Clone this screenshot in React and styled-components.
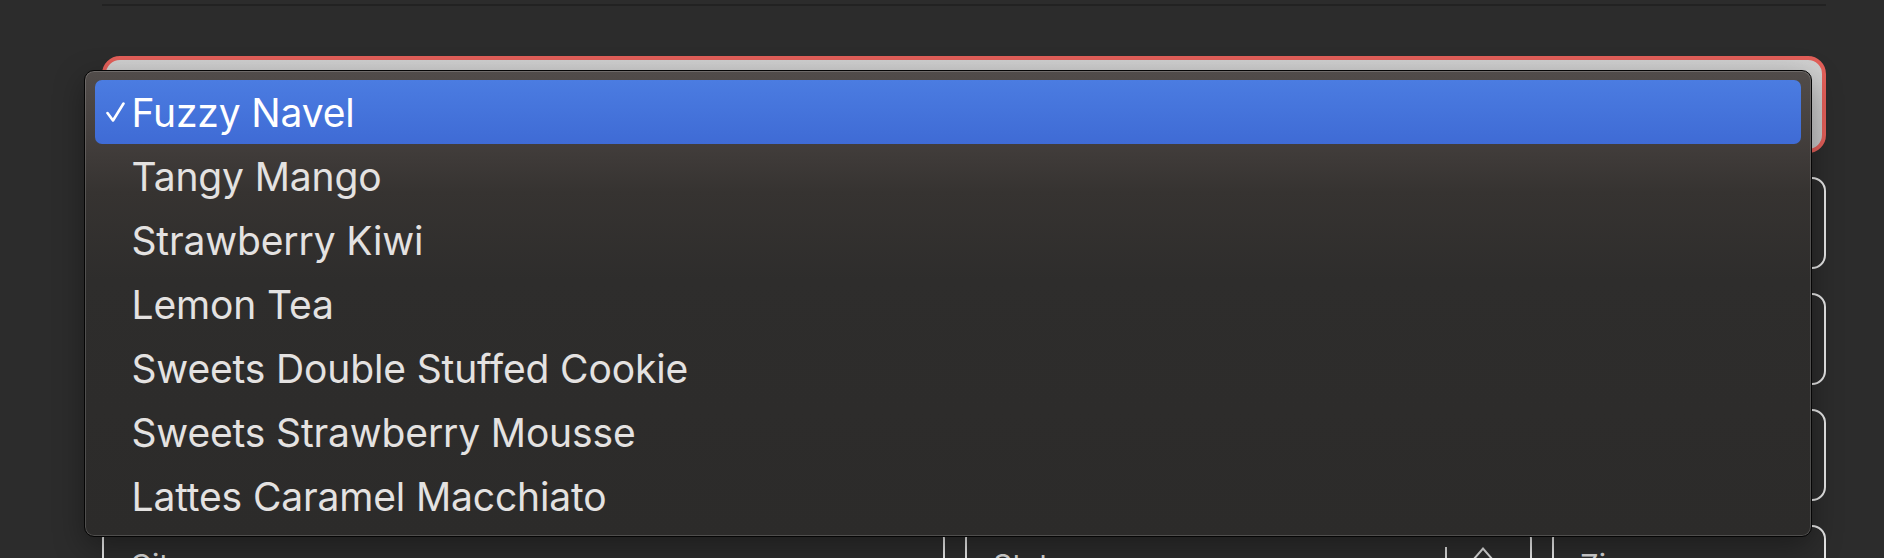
import React from "react";
import styled, { createGlobalStyle } from "styled-components";

const Global = createGlobalStyle`
  html, body { margin: 0; padding: 0; background: #2c2c2c; }
  body { font-family: Inter, "Liberation Sans", sans-serif; overflow: hidden; }
  * { box-sizing: border-box; }
`;

const Page = styled.div`
  width: 1884px;
  height: 558px;
  padding: 4px 58px 0 102px;
  background: #2c2c2c;
  overflow: hidden;
`;

const Divider = styled.div`
  height: 2px;
  background: #222222;
  margin-bottom: 50px;
`;

const Form = styled.div`
  display: flex;
  flex-direction: column;
  gap: 24px;
`;

const SelectWrap = styled.div`
  position: relative;
  height: 97px;
`;

const FocusSelect = styled.div`
  height: 100%;
  border: 4px solid #e35f59;
  border-radius: 18px;
  background: linear-gradient(#d0d0d0, #c6c6c6);
`;

const Field = styled.div`
  height: 92px;
  border: 2px solid #e6e6e6;
  border-radius: 14px;
  padding: 23px 26px 0;
  display: flex;
  align-items: flex-start;
  position: relative;
`;

const Label = styled.span`
  font-size: 30px;
  color: #d6d6d6;
  line-height: 1;
`;

const Row = styled.div`
  display: grid;
  grid-template-columns: 843px 567px 1fr;
  gap: 20px;
`;

const SelectDivider = styled.div`
  position: absolute;
  left: 478px;
  top: 20px;
  width: 2px;
  height: 60px;
  background: #d8d8d8;
`;

const Chevron = styled.svg`
  position: absolute;
  left: 505px;
  top: 20px;
`;

const Menu = styled.div`
  position: absolute;
  top: 14px;
  left: -18px;
  right: 14px;
  height: 467px;
  padding: 9px 10px;
  border-radius: 10px;
  border: 1px solid #050505;
  box-shadow: inset 0 0 0 1px rgba(255, 255, 255, 0.17),
    0 10px 30px rgba(0, 0, 0, 0.35);
  background: linear-gradient(
    to bottom,
    #514c4a 0%,
    #46413f 12%,
    #363331 26%,
    #2e2d2c 45%,
    #2c2b2a 100%
  );
  display: flex;
  flex-direction: column;
  z-index: 5;
`;

const Item = styled.div`
  height: 64px;
  flex: 0 0 64px;
  display: flex;
  align-items: center;
  border-radius: 7px;
  padding-left: 11px;
  font-size: 39px;
  letter-spacing: -0.15px;
  color: ${(p) => (p.$selected ? "#ffffff" : "#e4e2e1")};
  background: ${(p) =>
    p.$selected ? "linear-gradient(to bottom, #4b7ce1, #3f6bd5)" : "transparent"};
`;

const CheckSlot = styled.span`
  width: 25.5px;
  display: flex;
  align-items: center;
`;

const Check = () => (
  <svg width="19" height="20" viewBox="0 0 19 20">
    <path
      d="M1.5 11 L7 18.5 L17.5 1.5"
      fill="none"
      stroke="#ffffff"
      strokeWidth="2.6"
      strokeLinecap="round"
      strokeLinejoin="round"
    />
  </svg>
);

const items = [
  "Fuzzy Navel",
  "Tangy Mango",
  "Strawberry Kiwi",
  "Lemon Tea",
  "Sweets Double Stuffed Cookie",
  "Sweets Strawberry Mousse",
  "Lattes Caramel Macchiato",
];

export default function App() {
  return (
    <Page>
      <Global />
      <Divider />
      <Form>
        <SelectWrap>
          <FocusSelect />
          <Menu>
            {items.map((name, i) => (
              <Item key={name} $selected={i === 0}>
                <CheckSlot>{i === 0 ? <Check /> : null}</CheckSlot>
                {name}
              </Item>
            ))}
          </Menu>
        </SelectWrap>
        <Field />
        <Field />
        <Field />
        <Row>
          <Field>
            <Label>City</Label>
          </Field>
          <Field>
            <Label>State</Label>
            <SelectDivider />
            <Chevron width="22" height="14" viewBox="0 0 22 14">
              <path
                d="M1.5 12.5 L11 1.5 L20.5 12.5"
                fill="none"
                stroke="#d8d8d8"
                strokeWidth="2"
              />
            </Chevron>
          </Field>
          <Field>
            <Label>Zip</Label>
          </Field>
        </Row>
      </Form>
    </Page>
  );
}
